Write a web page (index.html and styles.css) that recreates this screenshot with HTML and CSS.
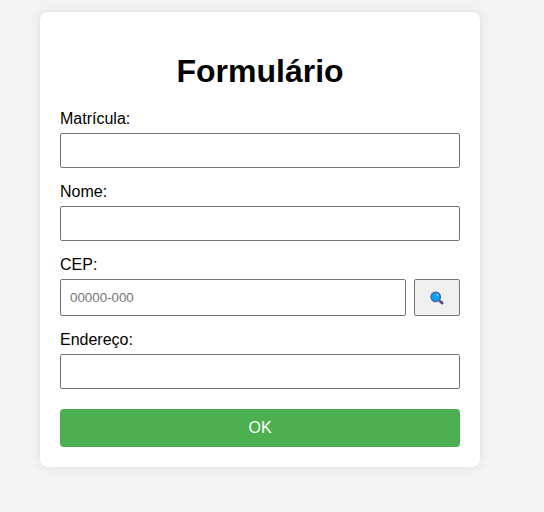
FILE: index.html
```html
<!DOCTYPE html>
<html lang="pt-BR">
<head>
<meta charset="utf-8">
<title>Formulário</title>
<link rel="stylesheet" href="styles.css">
</head>
<body>
<form class="form">
  <h1 class="title">Formulário</h1>
  <label class="label" for="matricula">Matrícula:</label>
  <input class="input" id="matricula" type="text">
  <label class="label" for="nome">Nome:</label>
  <input class="input" id="nome" type="text">
  <label class="label" for="cep">CEP:</label>
  <div class="cep-row">
    <input class="input" id="cep" type="text" placeholder="00000-000">
    <button class="search" type="button" aria-label="Buscar CEP">
      <svg class="icon" viewBox="0 0 14 14"><path d="M9 9l1.6 1.5" stroke="#5a4a8c" stroke-width="1.6"/><path d="M10.6 10.7l1.5 1.4" stroke="#5a4a8c" stroke-width="2.8" stroke-linecap="round"/><circle cx="5.7" cy="5.9" r="4.8" fill="#00a2f2" stroke="#58619c" stroke-width="1.2"/><circle cx="7.3" cy="4" r="0.9" fill="#9be2ff"/></svg>
    </button>
  </div>
  <label class="label" for="endereco">Endereço:</label>
  <input class="input" id="endereco" type="text">
  <button class="submit" type="button">OK</button>
</form>
</body>
</html>
```
FILE: styles.css
```css
body {
  box-sizing: border-box;
  min-height: 100vh;
  margin: 0;
  padding: 12px 0 0 40px;
  background: #f3f3f3;
  font: 16px "Liberation Sans", Arial, sans-serif;
}
.form {
  box-sizing: border-box;
  width: 440px;
  height: 455px;
  padding: 20px;
  background: #fff;
  border-radius: 8px;
  box-shadow: 0 0 10px rgba(0, 0, 0, 0.1);
}
.title {
  margin: 21px 0;
  font-size: 32px;
  line-height: 36px;
  text-align: center;
}
.label {
  display: block;
  margin-bottom: 5px;
  line-height: 18px;
}
.input {
  display: block;
  box-sizing: border-box;
  width: 100%;
  height: 35px;
  margin: 0 0 15px;
  padding: 8px 9px;
  border: 1px solid #767676;
  border-radius: 2px;
  font: 13.333px "Liberation Sans", Arial, sans-serif;
}
.input::placeholder {
  color: #757575;
}
.cep-row {
  display: flex;
  gap: 8px;
  height: 37px;
  margin-bottom: 15px;
}
.cep-row .input {
  flex: 1;
  height: 37px;
  margin: 0;
}
.search {
  display: flex;
  align-items: center;
  justify-content: center;
  width: 46px;
  padding: 0;
  background: #efefef;
  border: 1px solid #767676;
  border-radius: 2px;
}
.icon {
  width: 14px;
  height: 14px;
}
.submit {
  display: block;
  width: 100%;
  height: 38px;
  margin-top: 20px;
  border: 0;
  border-radius: 4px;
  background: #4caf50;
  color: #fff;
  font: 16px "Liberation Sans", Arial, sans-serif;
}
```
